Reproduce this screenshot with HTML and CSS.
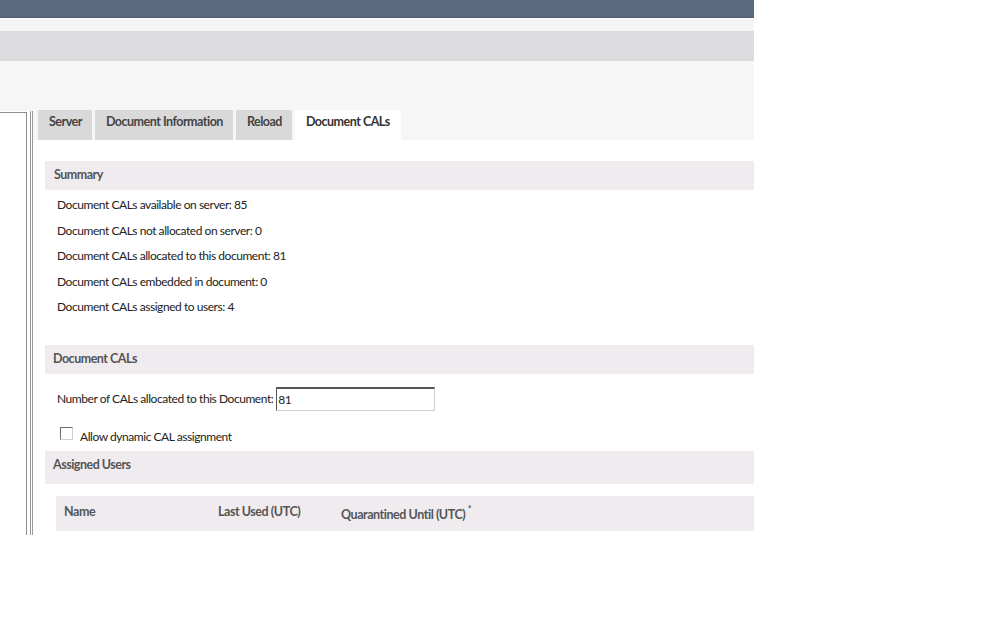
FILE: index.html
```html
<!DOCTYPE html>
<html>
<head>
<meta charset="utf-8">
<link rel="stylesheet" href="styles.css">
</head>
<body>
<div class="page">
  <div class="topbar"></div>
  <div class="band-light"></div>
  <div class="band-gray"></div>
  <div class="toolbar"></div>
  <div class="workspace">
    <div class="leftpane"></div>
    <div class="content">
      <div class="tabs">
        <span class="tab">Server</span>
        <span class="tab">Document Information</span>
        <span class="tab">Reload</span>
        <span class="tab active">Document CALs</span>
      </div>
      <div class="body">
        <div class="section-head">Summary</div>
        <div class="summary">
          <div class="line">Document CALs available on server: 85</div>
          <div class="line">Document CALs not allocated on server: 0</div>
          <div class="line">Document CALs allocated to this document: 81</div>
          <div class="line">Document CALs embedded in document: 0</div>
          <div class="line">Document CALs assigned to users: 4</div>
        </div>
        <div class="section-head cals">Document CALs</div>
        <div class="field-row">
          <label class="field-label" for="num">Number of CALs allocated to this Document:</label>
          <input class="field-input" id="num" type="text" value="81">
        </div>
        <div class="check-row">
          <input class="check" type="checkbox" id="dyn">
          <label for="dyn">Allow dynamic CAL assignment</label>
        </div>
        <div class="section-head users">Assigned Users</div>
        <div class="table-head">
          <span class="col col-name">Name</span>
          <span class="col col-used">Last Used (UTC)</span>
          <span class="col col-quar">Quarantined Until (UTC) <sup class="star">*</sup></span>
        </div>
      </div>
    </div>
  </div>
</div>
</body>
</html>
```
FILE: styles.css
```css
html, body {
  margin: 0;
  padding: 0;
  background: #ffffff;
}
body {
  font-family: Lato, "Liberation Sans", Arial, sans-serif;
  font-size: 12px;
  letter-spacing: -0.45px;
  color: #222;
}
.page {
  width: 754px;
}
.topbar {
  height: 17px;
  background: #5b6a7e;
  border-bottom: 1px solid #4d5b6d;
}
.band-light {
  height: 12px;
  background: #f5f5f5;
  border-top: 1px solid #ffffff;
}
.band-gray {
  height: 30px;
  background: #dcdbde;
}
.toolbar {
  height: 50px;
  background: #f6f6f6;
}
.workspace {
  display: flex;
  height: 424px;
}
.leftpane {
  width: 26px;
  background: #ffffff;
  border-top: 1px solid #8e8e8e;
  border-right: 1px solid #8e8e8e;
  margin-top: 1px;
}
.content {
  flex: 1;
  margin-left: 3px;
  border-left: 3px double #9a9a9a;
  display: flex;
  flex-direction: column;
}
.tabs {
  background: #f6f6f6;
  display: flex;
  align-items: stretch;
  padding-left: 5px;
  gap: 3px;
  margin-top: -1px;
  height: 30px;
}
.tab {
  background: #d9d9d9;
  color: #444;
  font-weight: bold;
  font-size: 12.5px;
  letter-spacing: -0.5px;
  padding: 4px 10px 0 11px;
  line-height: 16px;
}
.tab.active {
  background: #ffffff;
  color: #333;
  padding: 4px 11px 0 11px;
}
.body {
  flex: 1;
  background: #ffffff;
  padding-left: 12px;
  padding-top: 21px;
}
.section-head {
  height: 29px;
  line-height: 28px;
  background: #efebef;
  color: #555;
  font-weight: bold;
  font-size: 12.5px;
  letter-spacing: -0.5px;
  padding-left: 9px;
}
.summary {
  padding-top: 2px;
  padding-left: 12px;
}
.line {
  height: 25.5px;
  line-height: 25px;
}
.section-head.cals {
  margin-top: 25px;
  padding-left: 8px;
}
.field-row {
  display: flex;
  align-items: center;
  margin-top: 13px;
  padding-left: 12px;
  height: 24px;
}
.field-label {
  margin-right: 3px;
}
.field-input {
  box-sizing: border-box;
  width: 159px;
  height: 24px;
  margin: 0;
  padding: 0 0 0 1px;
  font: inherit;
  letter-spacing: inherit;
  color: #222;
  border-top: 2px solid #555;
  border-left: 1px solid #555;
  border-right: 1px solid #cfcfcf;
  border-bottom: 1px solid #cfcfcf;
  outline: none;
  background: #fff;
}
.check-row {
  display: flex;
  align-items: flex-start;
  padding-left: 15px;
  height: 40px;
  box-sizing: border-box;
  padding-top: 16px;
}
.check {
  appearance: none;
  -webkit-appearance: none;
  box-sizing: border-box;
  width: 13px;
  height: 13px;
  margin: 0 7px 0 0;
  border-top: 1px solid #6e6e6e;
  border-left: 1px solid #6e6e6e;
  border-right: 1px solid #d0d0d0;
  border-bottom: 1px solid #d0d0d0;
  background: #fff;
}
.check-row label {
  margin-top: 2px;
}
.section-head.users {
  height: 33px;
  line-height: 27px;
  padding-left: 8px;
}
.table-head {
  display: flex;
  align-items: center;
  margin-top: 12px;
  margin-left: 11px;
  height: 35px;
  background: #efebef;
  color: #555;
  font-weight: bold;
  font-size: 12.5px;
  letter-spacing: -0.45px;
}
.col-name {
  width: 154px;
  padding-left: 8px;
  margin-top: -3px;
}
.col-used {
  width: 123px;
  margin-top: -3px;
}
.col-quar {
  margin-top: 3px;
}
.star {
  font-size: 9px;
  vertical-align: 7px;
  line-height: 0;
}
```
